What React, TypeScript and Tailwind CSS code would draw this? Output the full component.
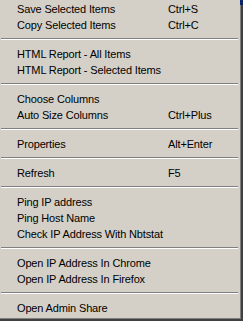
import React from 'react';

type Entry = { label: string; shortcut?: string } | 'sep';

const entries: Entry[] = [
  { label: 'Save Selected Items', shortcut: 'Ctrl+S' },
  { label: 'Copy Selected Items', shortcut: 'Ctrl+C' },
  'sep',
  { label: 'HTML Report - All Items' },
  { label: 'HTML Report - Selected Items' },
  'sep',
  { label: 'Choose Columns' },
  { label: 'Auto Size Columns', shortcut: 'Ctrl+Plus' },
  'sep',
  { label: 'Properties', shortcut: 'Alt+Enter' },
  'sep',
  { label: 'Refresh', shortcut: 'F5' },
  'sep',
  { label: 'Ping IP address' },
  { label: 'Ping Host Name' },
  { label: 'Check IP Address With Nbtstat' },
  'sep',
  { label: 'Open IP Address In Chrome' },
  { label: 'Open IP Address In Firefox' },
  'sep',
  { label: 'Open Admin Share' },
];

const App: React.FC = () => {
  return (
    <div className="relative w-[243px] h-[321px] border-r-2 border-b-2 border-[#404040] bg-[#d4d0c8]">
      {/* window title bar peeking out behind the menu */}
      <div className="absolute -right-[2px] top-0 w-[3px] h-[5px] bg-[#0a246a]"></div>

      <div className="h-full border-r border-b border-[#808080] pt-px text-[11px] tracking-[-0.15px] text-black font-['Liberation_Sans',Arial,sans-serif]">
        {entries.map((e, i) =>
          e === 'sep' ? (
            <div key={i} className="h-[13px] pt-[5px] pl-px pr-[2px]">
              <div className="h-px bg-[#808080]"></div>
              <div className="h-px bg-white"></div>
            </div>
          ) : (
            <div key={i} className="h-4 flex items-center pl-[17px] leading-4 whitespace-nowrap">
              <span className="w-[151px]">{e.label}</span>
              {e.shortcut && <span>{e.shortcut}</span>}
            </div>
          )
        )}
      </div>
    </div>
  );
};

export default App;
